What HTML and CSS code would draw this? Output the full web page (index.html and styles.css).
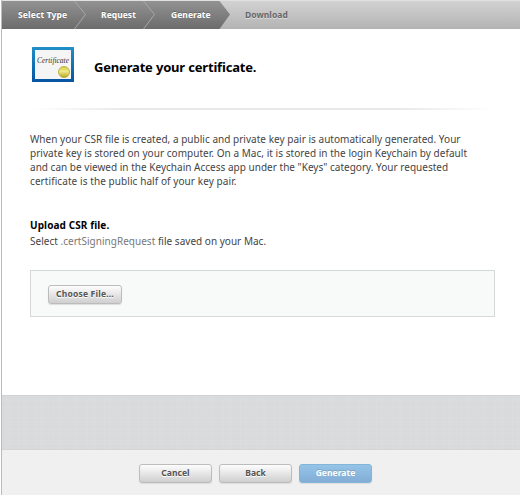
FILE: index.html
```html
<!DOCTYPE html>
<html lang="en">
<head>
<meta charset="utf-8">
<title>Generate your certificate</title>
<link rel="stylesheet" href="styles.css">
</head>
<body>
<div class="window">
  <nav class="steps">
    <svg class="steps-bg" width="518" height="28" viewBox="0 0 518 28">
      <defs><linearGradient id="dark" x1="0" y1="0" x2="0" y2="1"><stop offset="0" stop-color="#929292"/><stop offset="1" stop-color="#6c6c6c"/></linearGradient></defs>
      <path d="M0 0H217.500L228 13.500L217.500 28H0Z" fill="url(#dark)"/>
      <path d="M72.500 0L83.500 13.500L72.500 28M141.500 0L152.500 13.500L141.500 28" fill="none" stroke="#a8a8a8" stroke-width="1"/>
    </svg>
    <span class="step s1">Select Type</span>
    <span class="step s2">Request</span>
    <span class="step s3">Generate</span>
    <span class="step s4">Download</span>
  </nav>
  <main>
    <header>
      <svg class="cert" width="42" height="35" viewBox="0 0 42 35">
        <defs>
          <linearGradient id="frame" x1="0" y1="0" x2="0" y2="1"><stop offset="0" stop-color="#218fc6"/><stop offset="1" stop-color="#0754a2"/></linearGradient>
          <linearGradient id="seal" x1="0" y1="0" x2="0" y2="1"><stop offset="0" stop-color="#d5cc43"/><stop offset=".45" stop-color="#eee98b"/><stop offset="1" stop-color="#b5a51b"/></linearGradient>
        </defs>
        <rect width="42" height="35" rx=".5" fill="url(#frame)"/>
        <rect x="3" y="3" width="36" height="29" fill="#f5f5f5"/>
        <text x="5" y="16" textLength="32" lengthAdjust="spacingAndGlyphs" class="script">Certificate</text>
        <circle cx="32" cy="25" r="5.500" fill="url(#seal)" stroke="#b3a52d" stroke-width=".8"/>
      </svg>
      <h1>Generate your certificate.</h1>
    </header>
    <div class="rule"></div>
    <p class="intro"><span class="l1">When your CSR file is created, a public and private key pair is automatically generated. Your</span><span class="l2">private key is stored on your computer. On a Mac, it is stored in the login Keychain by default</span><span class="l3">and can be viewed in the Keychain Access app under the "Keys" category. Your requested</span><span class="l4">certificate is the public half of your key pair.</span></p>
    <h2>Upload CSR file.</h2>
    <p class="hint">Select <em>.certSigningRequest</em> file saved on your Mac.</p>
    <div class="upload"><button class="choose">Choose File...</button></div>
  </main>
  <div class="band"></div>
  <footer>
    <button>Cancel</button>
    <button>Back</button>
    <button class="primary">Generate</button>
  </footer>
</div>
</body>
</html>
```
FILE: styles.css
```css
* { box-sizing: border-box; }
body { margin: 0; background: #fff; color: #444; font: 10px/14px "Noto Sans", "Open Sans", sans-serif; overflow: hidden; }
.window { width: 519px; height: 495px; border-left: 1px solid #b9bbbc; margin-left: 1px; display: flex; flex-direction: column; }
.steps { position: relative; height: 29px; border-top: 1px solid #dfe0e0; background: linear-gradient(#d2d2d2, #b3b3b3); display: flex; align-items: center; flex: none; }
.steps-bg { position: absolute; left: 0; top: 0; }
.step { position: relative; color: #fff; font: bold 8.500px/14px "Noto Sans", sans-serif; letter-spacing: .05px; white-space: nowrap; text-shadow: 0 -1px 0 #666; }
.s1 { width: 83px; margin-left: 16px; letter-spacing: .15px; }
.s2 { width: 70px; }
.s3 { width: 74px; }
.s4 { color: #686868; text-shadow: 0 1px 0 #ddd; }
main { height: 366px; padding: 18px 25px 0 28px; flex: none; }
header { display: flex; align-items: center; height: 35px; margin-left: 2px; }
.script { font: italic 9px "Liberation Serif", serif; fill: #333; }
h1 { color: #000; font: bold 13px/18px "Noto Sans", sans-serif; letter-spacing: -.18px; margin: 5px 0 0 20px; white-space: nowrap; }
.rule { height: 2px; margin-top: 26px; background: linear-gradient(90deg, #fff, #e9e9e9 20%, #e9e9e9 80%, #fff); }
.intro { margin: 22px 0 0; }
.intro span { display: block; white-space: nowrap; width: max-content; }
.l1 { letter-spacing: .027px; }
.l2 { letter-spacing: .04px; }
.l3 { letter-spacing: .015px; }
.l4 { letter-spacing: .08px; }
h2 { color: #000; font: bold 10px/14px "Noto Sans", sans-serif; letter-spacing: .1px; margin: 30px 0 0; }
.hint { margin: 2px 0 0; white-space: nowrap; letter-spacing: .02px; }
.hint em { font-style: normal; color: #777; }
.upload { height: 47px; margin-top: 22px; border: 1px solid #d6d9d9; background: #f8faf9; padding: 14px 17px; }
button { width: 73px; height: 19px; padding: 0 0 1px; border: 1px solid #bcbcbc; border-radius: 3px; background: linear-gradient(#fdfdfd, #cfcfcf); color: #555; font: bold 8.500px/14px "Noto Sans", sans-serif; letter-spacing: .05px; text-shadow: 0 1px 0 #fff; box-shadow: 0 1px 1px #ddd; display: block; white-space: nowrap; }
.choose { width: 74px; letter-spacing: .2px; }
.band { height: 55px; flex: none; border-top: 1px solid #d0d2d3; border-bottom: 1px solid #d4d5d6; background: repeating-linear-gradient(90deg, #ffffff0c 0 1px, transparent 1px 4px, #ffffff0a 4px 9px, transparent 9px 17px), repeating-linear-gradient(#ffffff0c 0 1px, transparent 1px 3px, #ffffff0a 3px 5px, transparent 5px 11px), #d8dadb; }
footer { flex: 1; background: #f0f0f0; display: flex; gap: 7px; padding: 14px 0 0 137px; }
.primary { background: linear-gradient(#95c4e8, #82add6); border-color: #83b5d8; color: #fff; text-shadow: 0 -1px 0 #7ba5c7; }
```
